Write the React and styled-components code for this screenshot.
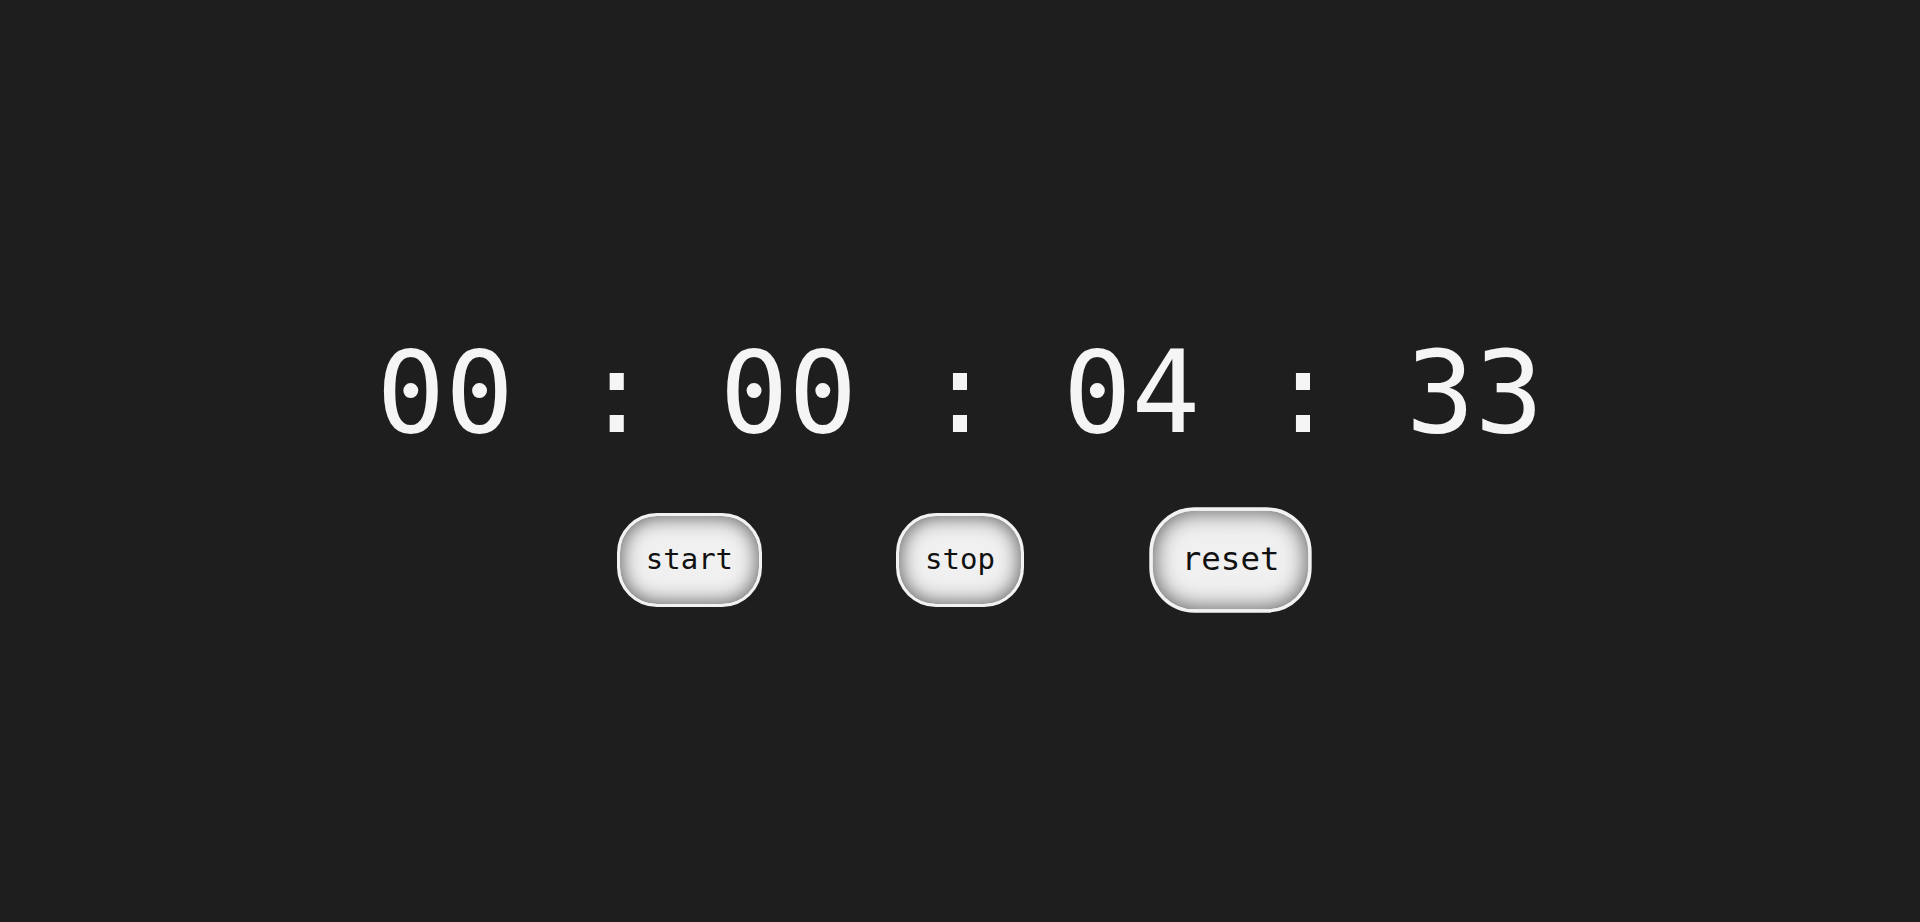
import { createGlobalStyle, styled } from "styled-components";

const GlobalStyle = createGlobalStyle`
  * {
    box-sizing: border-box;
  }
  body {
    margin: 0;
    background: #1e1e1e;
    font-family: "DejaVu Sans Mono", "Liberation Mono", monospace;
  }
`;

const App = () => {
  return (
    <>
      <GlobalStyle />
      <Wrapper>
        <Timer>00 : 00 : 04 : 33</Timer>
        <Controls>
          <Button>start</Button>
          <Button>stop</Button>
          <Button $active>reset</Button>
        </Controls>
      </Wrapper>
    </>
  );
};

const Wrapper = styled.main`
  min-height: 100vh;
  display: flex;
  flex-direction: column;
  align-items: center;
  justify-content: center;
  padding-top: 12px;
`;

const Timer = styled.h1`
  margin: 0;
  color: #f5f5f5;
  font-size: 114px;
  font-weight: 400;
  line-height: 1.164;
  white-space: pre;
`;

const Controls = styled.div`
  display: flex;
  align-items: center;
  gap: 134px;
  margin-top: 53px;
`;

const Button = styled.button`
  font-family: "DejaVu Sans Mono", "Liberation Mono", monospace;
  font-size: 29px;
  line-height: 1.1;
  color: #111;
  padding: 28px 26px;
  border: 3px solid #f2f2f2;
  border-radius: 40px;
  background: #f0f0f0;
  box-shadow: inset 0 0 20px 1px #5a5a5a;
  cursor: pointer;
  transform: ${(props) => (props.$active ? "scale(1.12)" : "none")};
`;

export default App;
